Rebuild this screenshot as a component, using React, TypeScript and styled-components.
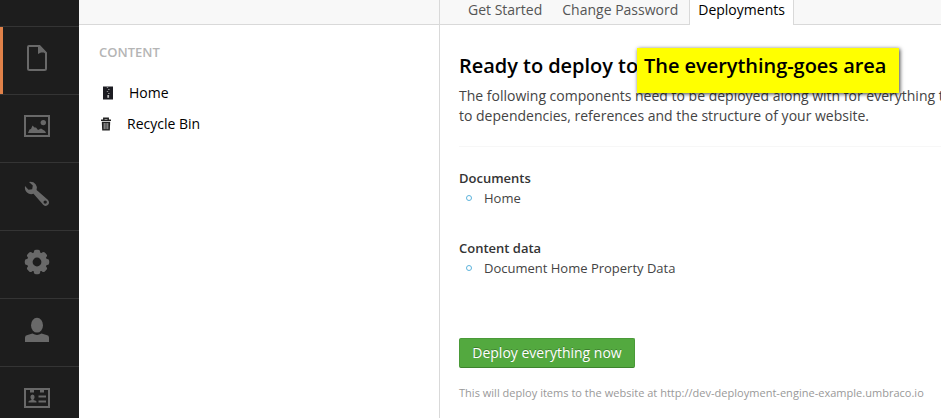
import React from "react";
import styled, { createGlobalStyle } from "styled-components";

const GlobalStyle = createGlobalStyle`
  * { box-sizing: border-box; }
  body {
    margin: 0;
    overflow: hidden;
    background: #fff;
    font-family: "Open Sans", "Noto Sans", sans-serif;
    font-size: 14px;
    line-height: 20px;
    color: #444;
  }
  h2, h5, p, ul { margin: 0; padding: 0; font-weight: 400; }
`;

const Shell = styled.div`
  display: flex;
  width: 941px;
  height: 418px;
  overflow: hidden;
`;

const AppBar = styled.nav`
  flex: none;
  width: 79px;
  padding-top: 26px;
  background: #1d1d1d;
`;

const Section = styled.div<{ $active?: boolean }>`
  height: 68px;
  display: flex;
  justify-content: center;
  padding: 18px 5px 0 0;
  border-top: 1px solid #343434;
  box-shadow: ${(p) => (p.$active ? "inset 3px 0 0 #e08149" : "none")};
  color: #696969;
`;

const SectionIcon = styled.svg`
  display: block;
  width: 26px;
  height: 26px;
`;

const TreePane = styled.aside`
  flex: none;
  width: 361px;
  border-right: 1px solid #d9d9d9;
`;

const TopStrip = styled.div`
  height: 25px;
  background: #f8f8f8;
  border-bottom: 1px solid #d9d9d9;
`;

const TreeTitle = styled.h5`
  margin: 17px 0 0 20px;
  font-size: 13px;
  font-weight: 600;
  color: #b5b5b5;
`;

const TreeItem = styled.div<{ $gap: number }>`
  display: flex;
  align-items: center;
  gap: ${(p) => p.$gap}px;
  height: 31px;
  padding-left: 22px;
  color: #000;
`;

const Tree = styled.div`
  padding-top: 15px;
`;

const TreeIcon = styled.svg`
  width: 14px;
  height: 14px;
`;

const Editor = styled.main`
  flex: 1;
  min-width: 0;
`;

const Tabs = styled(TopStrip)`
  display: flex;
`;

const Tab = styled.div<{ $active?: boolean }>`
  height: 25px;
  white-space: nowrap;
  padding: 0 8px;
  margin-right: ${(p) => (p.$active ? 0 : 4)}px;
  border: solid #d9d9d9;
  border-width: ${(p) => (p.$active ? "0 1px" : "0")};
  background: ${(p) => (p.$active ? "#fff" : "transparent")};
  color: ${(p) => (p.$active ? "#000" : "#555")};
  &:first-child { margin-left: 20px; }
  &:last-child { margin-left: -1px; }
`;

const Body = styled.div`
  padding: 26px 0 0 19px;
`;

const Heading = styled.h2`
  position: relative;
  height: 35px;
  font-size: 20px;
  font-weight: 600;
  letter-spacing: -0.04px;
  line-height: 30px;
  color: #000;
  white-space: nowrap;
`;

const Highlight = styled.span`
  position: absolute;
  left: 178px;
  top: -3px;
  width: 262px;
  height: 45px;
  padding: 3px 0 0 7px;
  background: #ff0;
  box-shadow: 1px 1px 4px rgba(0, 0, 0, 0.75);
`;

const Intro = styled.p`
  height: 61px;
  padding-bottom: 20px;
  border-bottom: 1px solid #f7f7f7;
  white-space: nowrap;
`;

const Group = styled.section`
  height: 70px;
  font-size: 13px;
`;

const Groups = styled.div`
  padding-top: 21px;
`;

const GroupTitle = styled.h5`
  font-size: 13px;
  font-weight: 600;
  color: #343434;
`;

const GroupItem = styled.div`
  display: flex;
  align-items: center;
  gap: 12px;
  padding-left: 7px;
`;

const Ring = styled.i`
  width: 6px;
  height: 6px;
  border: 1px solid #5cb3dc;
  border-radius: 50%;
`;

const DeployButton = styled.button`
  display: block;
  width: 176px;
  height: 30px;
  margin-top: 30px;
  padding: 0;
  border: 1px solid #4a9a38;
  border-bottom-color: #3d842d;
  border-radius: 2px;
  background: #53a93f;
  color: #fff;
  font: inherit;
  text-shadow: 0 -1px 0 rgba(0, 0, 0, 0.25);
`;

const Note = styled.p`
  margin-top: 15px;
  font-size: 11px;
  letter-spacing: 0.02px;
  color: #999;
  white-space: nowrap;
`;

const Doc = () => (
  <SectionIcon viewBox="0 0 26 26">
    <path d="M5 1H15.5L22 8V23.5Q22 25 20.5 25H5.5Q4 25 4 23.5V2Q4 1 5 1Z" fill="none" stroke="currentColor" strokeWidth="2" />
    <path d="M14 1V9L17 7.5H22V7L16 1Z" fill="currentColor" />
  </SectionIcon>
);

const Picture = () => (
  <SectionIcon viewBox="0 0 26 26">
    <rect x="1" y="3" width="24" height="20" fill="none" stroke="currentColor" strokeWidth="2" />
    <circle cx="19.3" cy="9.6" r="2.7" fill="currentColor" />
    <path d="M4 20L5.5 16.5L7 16L8.5 12.5L10.5 14.5L12 14.5L14 17L17 15.5L21 18L22 20Z" fill="currentColor" />
  </SectionIcon>
);

const Wrench = () => (
  <SectionIcon viewBox="0 0 26 26">
    <path
      fillRule="evenodd"
      fill="currentColor"
      d="M5 1Q9 .2 11.6 3.2Q13.6 5.6 12.6 9L23.8 18.8Q26 21.4 24.3 23.6Q22 26 19.4 24L9.5 12.8Q5.8 14 3 11.6Q.4 9 1 5L4.5 8.8L8.2 8.2L8.8 4.6ZM21.2 19.4A1.7 1.7 0 1 0 21.2 22.8A1.7 1.7 0 1 0 21.2 19.4Z"
    />
  </SectionIcon>
);

const Gear = () => (
  <SectionIcon viewBox="0 0 26 26">
    <g fill="currentColor">
      {[0, 45, 90, 135].map((a) => (
        <rect key={a} x="9.9" y=".8" width="6.2" height="24.4" rx="2" transform={`rotate(${a} 13 13)`} />
      ))}
    </g>
    <circle cx="13" cy="13" r="7.6" fill="none" stroke="currentColor" strokeWidth="5" />
    <circle cx="13" cy="13" r="4.4" fill="#1d1d1d" />
  </SectionIcon>
);

const Person = () => (
  <SectionIcon viewBox="0 0 26 26">
    <ellipse cx="13" cy="8.2" rx="6" ry="7.4" fill="currentColor" />
    <path d="M1 25V20.5Q1 18.4 3.5 18L8.5 16.6Q13 19.2 17.5 16.6L22.5 18Q25 18.4 25 20.5V25Z" fill="currentColor" />
  </SectionIcon>
);

const Card = () => (
  <SectionIcon viewBox="0 0 26 26">
    <rect x="1" y="4" width="24" height="18" fill="none" stroke="currentColor" strokeWidth="2" />
    <path d="M6 4H10V7.5H6ZM16 4H20V7.5H16ZM14.5 10.5H22V12.5H14.5ZM14.5 15.5H22V17.5H14.5Z" fill="currentColor" />
    <ellipse cx="8.5" cy="12" rx="2.1" ry="2.6" fill="currentColor" />
    <path d="M4.5 17.6V16.6Q4.5 15.8 7.5 15V13H9.5V15Q12.5 15.8 12.5 16.6V17.6Z" fill="currentColor" />
  </SectionIcon>
);

const Zip = () => (
  <TreeIcon viewBox="0 0 14 14">
    <path d="M2 .5H12V13.5H2Z" fill="#1c1c22" />
    <path d="M5.8 1.5H7.2M7 3.5H8.6M5.8 5.5H7.2M7 7.5H8.6" stroke="#999" strokeWidth=".9" />
    <path d="M6.3 9H8.1V11.8H6.3Z" fill="#bbb" />
  </TreeIcon>
);

const Trash = () => (
  <TreeIcon viewBox="0 0 14 14">
    <path d="M0 3.3H10M2.8 2.6V1.2H7.2V2.6" fill="none" stroke="#222" strokeWidth="1.5" />
    <path d="M.8 4.8H9.2L8.8 13.5H1.2Z" fill="#222" />
    <path d="M3.2 6V12.2M5 6V12.2M6.8 6V12.2" stroke="#ccc" strokeWidth=".8" />
  </TreeIcon>
);

const sections = [Doc, Picture, Wrench, Gear, Person, Card];

export default function App() {
  return (
    <>
      <GlobalStyle />
      <Shell>
        <AppBar>
          {sections.map((Icon, i) => (
            <Section key={i} $active={i === 0}>
              <Icon />
            </Section>
          ))}
        </AppBar>
        <TreePane>
          <TopStrip />
          <TreeTitle>CONTENT</TreeTitle>
          <Tree>
            <TreeItem $gap={14}><Zip />Home</TreeItem>
            <TreeItem $gap={12}><Trash />Recycle Bin</TreeItem>
          </Tree>
        </TreePane>
        <Editor>
          <Tabs>
            <Tab>Get Started</Tab>
            <Tab>Change Password</Tab>
            <Tab $active>Deployments</Tab>
          </Tabs>
          <Body>
            <Heading>
              Ready to deploy to
              <Highlight>The everything-goes area</Highlight>
            </Heading>
            <Intro>
              The following components need to be deployed along with for everything to work due
              <br />
              to dependencies, references and the structure of your website.
            </Intro>
            <Groups>
              <Group>
                <GroupTitle>Documents</GroupTitle>
                <GroupItem><Ring />Home</GroupItem>
              </Group>
              <Group>
                <GroupTitle>Content data</GroupTitle>
                <GroupItem><Ring />Document Home Property Data</GroupItem>
              </Group>
            </Groups>
            <DeployButton>Deploy everything now</DeployButton>
            <Note>This will deploy items to the website at http://dev-deployment-engine-example.umbraco.io</Note>
          </Body>
        </Editor>
      </Shell>
    </>
  );
}
